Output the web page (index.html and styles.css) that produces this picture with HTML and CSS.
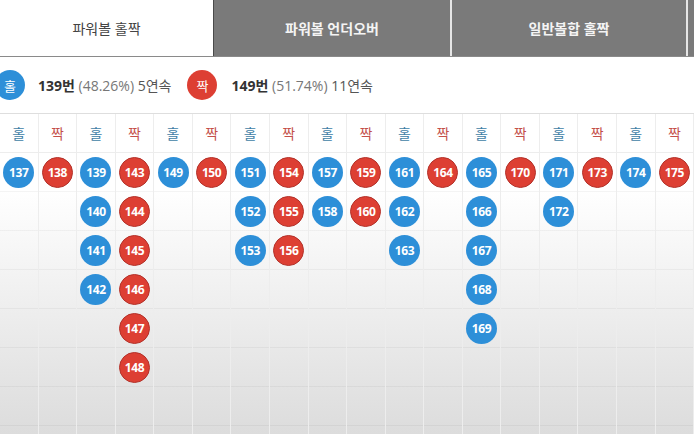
FILE: index.html
```html
<!DOCTYPE html>
<html lang="ko">
<head>
    <meta charset="UTF-8">
    <meta name="viewport" content="width=device-width, initial-scale=1.0">
    <title>파워볼 홀짝</title>
    <link rel="stylesheet" href="styles.css">
</head>
<body>
    <div class="tabs">
        <div class="tab active">파워볼 홀짝</div>
        <div class="tab">파워볼 언더오버</div>
        <div class="tab">일반볼합 홀짝</div>
        <div class="tab tab-rest"></div>
    </div>

    <div class="summary">
        <span class="badge odd">홀</span>
        <span class="stat"><b>139번</b> <span class="pct">(48.26%)</span> 5연속</span>
        <span class="badge even">짝</span>
        <span class="stat"><b>149번</b> <span class="pct">(51.74%)</span> 11연속</span>
    </div>

    <div class="board">
        <div class="col">
            <div class="head odd">홀</div>
            <div class="stack"><div class="cell"><span class="ball odd">137</span></div></div>
        </div>
        <div class="col">
            <div class="head even">짝</div>
            <div class="stack"><div class="cell"><span class="ball even">138</span></div></div>
        </div>
        <div class="col">
            <div class="head odd">홀</div>
            <div class="stack">
                <div class="cell"><span class="ball odd">139</span></div>
                <div class="cell"><span class="ball odd">140</span></div>
                <div class="cell"><span class="ball odd">141</span></div>
                <div class="cell"><span class="ball odd">142</span></div>
            </div>
        </div>
        <div class="col">
            <div class="head even">짝</div>
            <div class="stack">
                <div class="cell"><span class="ball even">143</span></div>
                <div class="cell"><span class="ball even">144</span></div>
                <div class="cell"><span class="ball even">145</span></div>
                <div class="cell"><span class="ball even">146</span></div>
                <div class="cell"><span class="ball even">147</span></div>
                <div class="cell"><span class="ball even">148</span></div>
            </div>
        </div>
        <div class="col">
            <div class="head odd">홀</div>
            <div class="stack"><div class="cell"><span class="ball odd">149</span></div></div>
        </div>
        <div class="col">
            <div class="head even">짝</div>
            <div class="stack"><div class="cell"><span class="ball even">150</span></div></div>
        </div>
        <div class="col">
            <div class="head odd">홀</div>
            <div class="stack">
                <div class="cell"><span class="ball odd">151</span></div>
                <div class="cell"><span class="ball odd">152</span></div>
                <div class="cell"><span class="ball odd">153</span></div>
            </div>
        </div>
        <div class="col">
            <div class="head even">짝</div>
            <div class="stack">
                <div class="cell"><span class="ball even">154</span></div>
                <div class="cell"><span class="ball even">155</span></div>
                <div class="cell"><span class="ball even">156</span></div>
            </div>
        </div>
        <div class="col">
            <div class="head odd">홀</div>
            <div class="stack">
                <div class="cell"><span class="ball odd">157</span></div>
                <div class="cell"><span class="ball odd">158</span></div>
            </div>
        </div>
        <div class="col">
            <div class="head even">짝</div>
            <div class="stack">
                <div class="cell"><span class="ball even">159</span></div>
                <div class="cell"><span class="ball even">160</span></div>
            </div>
        </div>
        <div class="col">
            <div class="head odd">홀</div>
            <div class="stack">
                <div class="cell"><span class="ball odd">161</span></div>
                <div class="cell"><span class="ball odd">162</span></div>
                <div class="cell"><span class="ball odd">163</span></div>
            </div>
        </div>
        <div class="col">
            <div class="head even">짝</div>
            <div class="stack"><div class="cell"><span class="ball even">164</span></div></div>
        </div>
        <div class="col">
            <div class="head odd">홀</div>
            <div class="stack">
                <div class="cell"><span class="ball odd">165</span></div>
                <div class="cell"><span class="ball odd">166</span></div>
                <div class="cell"><span class="ball odd">167</span></div>
                <div class="cell"><span class="ball odd">168</span></div>
                <div class="cell"><span class="ball odd">169</span></div>
            </div>
        </div>
        <div class="col">
            <div class="head even">짝</div>
            <div class="stack"><div class="cell"><span class="ball even">170</span></div></div>
        </div>
        <div class="col">
            <div class="head odd">홀</div>
            <div class="stack">
                <div class="cell"><span class="ball odd">171</span></div>
                <div class="cell"><span class="ball odd">172</span></div>
            </div>
        </div>
        <div class="col">
            <div class="head even">짝</div>
            <div class="stack"><div class="cell"><span class="ball even">173</span></div></div>
        </div>
        <div class="col">
            <div class="head odd">홀</div>
            <div class="stack"><div class="cell"><span class="ball odd">174</span></div></div>
        </div>
        <div class="col">
            <div class="head even">짝</div>
            <div class="stack"><div class="cell"><span class="ball even">175</span></div></div>
        </div>
    </div>
</body>
</html>
```

FILE: styles.css
```css
body {
    margin: 0;
    height: 434px;
    overflow: hidden;
    font-family: "Open Sans", "Noto Sans CJK KR", sans-serif;
    color: #333;
    background: linear-gradient(#fff 0, #fff 190px, #dcdcdc 434px);
}

/* tab bar */
.tabs {
    display: flex;
    height: 56px;
    border-bottom: 1px solid #8a8a8a;
}
.tab {
    display: flex;
    align-items: center;
    justify-content: center;
    background-color: #7a7a7a;
    color: #f4f4f4;
    font-size: 14px;
    font-weight: bold;
    border-left: 2px solid #e6e6e6;
}
.tab:nth-child(2) {
    width: 236px;
    border-left: 1px solid #4a4a4a;
}
.tab:nth-child(3) {
    width: 234px;
}
.tab.active {
    width: 213px;
    background-color: #fff;
    color: #444;
    font-weight: normal;
    border-left: none;
}
.tab-rest {
    flex: 1;
}

/* summary */
.summary {
    display: flex;
    align-items: center;
    height: 56px;
    border-bottom: 1px solid #dedede;
    font-size: 14px;
    color: #555;
}
.badge {
    width: 30px;
    height: 30px;
    border-radius: 50%;
    display: flex;
    align-items: center;
    justify-content: center;
    color: #fff;
    font-size: 13px;
    flex-shrink: 0;
}
.badge.odd {
    background-color: #2d8fd8;
    margin-left: -5px;
    margin-right: 13px;
}
.badge.even {
    background-color: #dd3f33;
    margin-left: 16px;
    margin-right: 14px;
}
.stat b {
    color: #333;
}
.pct {
    color: #777;
}

/* board */
.board {
    display: flex;
}
.col {
    flex: 1;
    border-right: 1px solid #ededed;
}
.head {
    height: 38px;
    line-height: 40px;
    text-align: center;
    font-size: 14px;
    border-bottom: 1px solid #ededed;
}
.head.odd {
    color: #3f7ea6;
}
.head.even {
    color: #c4504a;
}
.stack {
    height: 281px;
    background: repeating-linear-gradient(transparent 0 38px, rgba(0, 0, 0, 0.045) 38px 39px);
}
.cell {
    height: 39px;
    display: flex;
    align-items: center;
    justify-content: center;
}
.ball {
    width: 31px;
    height: 31px;
    border-radius: 50%;
    display: flex;
    align-items: center;
    justify-content: center;
    box-sizing: border-box;
    color: #fff;
    font-size: 12px;
    font-weight: bold;
    letter-spacing: -0.4px;
}
.ball.odd {
    background-color: #2d8fd8;
}
.ball.even {
    background-color: #dd3f33;
    border: 1px solid #b3322a;
}
```
